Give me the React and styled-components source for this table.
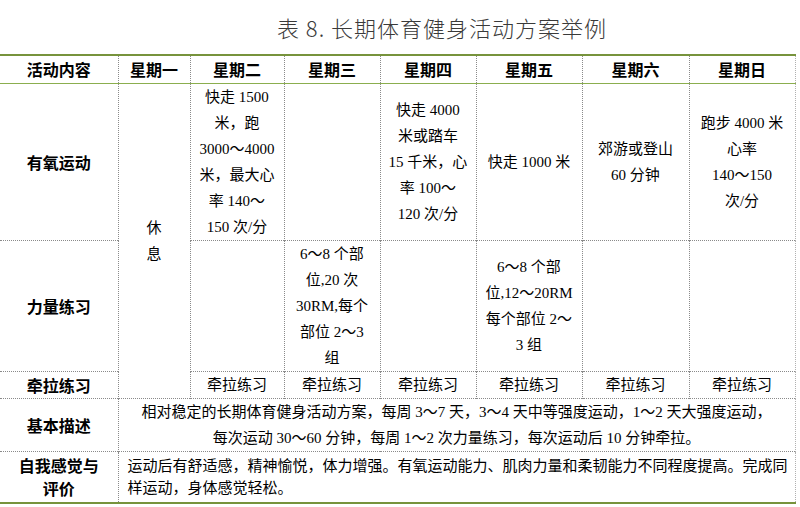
import React from "react"
import styled, { createGlobalStyle } from "styled-components";

const GlobalStyle = createGlobalStyle`
    html, body {
        margin: 0;
        padding: 0;
        background: #FFFFFF;
    }
`

const days = ["星期一", "星期二", "星期三", "星期四", "星期五", "星期六", "星期日"];
const colWidths = [118, 72, 94, 96, 96, 106, 107, 106];

const Lines = ({ lines }) => (
    <>
        {lines.map((line, i) => (
            <React.Fragment key={i}>
                {i > 0 && <br />}
                {line}
            </React.Fragment>
        ))}
    </>
);

const App = () => {
    return (
        <Page>
            <GlobalStyle />
            <Title>表 8. 长期体育健身活动方案举例</Title>
            <Table>
                <colgroup>
                    {colWidths.map((w, i) => <col key={i} style={{ width: w }} />)}
                </colgroup>
                <thead>
                    <HeadRow>
                        <HeadCell>活动内容</HeadCell>
                        {days.map(d => <HeadCell key={d}>{d}</HeadCell>)}
                    </HeadRow>
                </thead>
                <tbody>
                    <BodyRow $height={157}>
                        <LabelCell>有氧运动</LabelCell>
                        <Cell rowSpan={3}><Lines lines={["休", "息"]} /></Cell>
                        <Cell><Lines lines={["快走 1500", "米，跑", "3000～4000", "米，最大心", "率 140～", "150 次/分"]} /></Cell>
                        <Cell />
                        <Cell><Lines lines={["快走 4000", "米或踏车", "15 千米，心", "率 100～", "120 次/分"]} /></Cell>
                        <Cell>快走 1000 米</Cell>
                        <Cell><Lines lines={["郊游或登山", "60 分钟"]} /></Cell>
                        <Cell $last><Lines lines={["跑步 4000 米", "心率", "140～150", "次/分"]} /></Cell>
                    </BodyRow>
                    <BodyRow $height={130}>
                        <LabelCell>力量练习</LabelCell>
                        <Cell />
                        <Cell><Lines lines={["6～8 个部", "位,20 次", "30RM,每个", "部位 2～3", "组"]} /></Cell>
                        <Cell />
                        <Cell><Lines lines={["6～8 个部", "位,12～20RM", "每个部位 2～", "3 组"]} /></Cell>
                        <Cell />
                        <Cell $last />
                    </BodyRow>
                    <BodyRow $height={27}>
                        <LabelCell>牵拉练习</LabelCell>
                        <Cell>牵拉练习</Cell>
                        <Cell>牵拉练习</Cell>
                        <Cell>牵拉练习</Cell>
                        <Cell>牵拉练习</Cell>
                        <Cell>牵拉练习</Cell>
                        <Cell $last>牵拉练习</Cell>
                    </BodyRow>
                    <BodyRow $height={53}>
                        <LabelCell>基本描述</LabelCell>
                        <Cell colSpan={7} $last>
                            <Lines lines={[
                                "相对稳定的长期体育健身活动方案，每周 3～7 天，3～4 天中等强度运动，1～2 天大强度运动，",
                                "每次运动 30～60 分钟，每周 1～2 次力量练习，每次运动后 10 分钟牵拉。"
                            ]} />
                        </Cell>
                    </BodyRow>
                    <BodyRow $height={52} $end>
                        <LabelCell $lh={23}><Lines lines={["自我感觉与", "评价"]} /></LabelCell>
                        <Cell colSpan={7} $last $align="left" $lh={22}>
                            <Lines lines={[
                                "运动后有舒适感，精神愉悦，体力增强。有氧运动能力、肌肉力量和柔韧能力不同程度提高。完成同",
                                "样运动，身体感觉轻松。"
                            ]} />
                        </Cell>
                    </BodyRow>
                </tbody>
            </Table>
        </Page>
    );
}

const Page = styled.div`
    width: 800px;
    height: 507px;
    overflow: hidden;
    background: #FFFFFF;
`

const Title = styled.div`
    /* 表题 */
    height: 54px;
    padding-left: 84px;
    display: flex;
    justify-content: center;
    align-items: center;

    font-family: "Noto Sans CJK SC", sans-serif;
    font-weight: 300;
    font-size: 22px;
    letter-spacing: 1px;
    color: #3A3A3A;
`

const Table = styled.table`
    width: 795px;
    table-layout: fixed;
    border-collapse: collapse;
    border-top: 2px solid #77933C;

    font-family: "Liberation Serif", "Noto Sans CJK SC", serif;
    font-size: 15px;
    color: #000000;
`

const HeadRow = styled.tr`
    height: 28px;
    border-bottom: 1px solid #8BAE4E;
`

const BodyRow = styled.tr`
    height: ${p => p.$height}px;
    border-bottom: ${p => p.$end ? "2px solid #77933C" : "1px dotted #8A8A8A"};
`

const HeadCell = styled.th`
    padding: 0 4px;
    font-family: "Noto Sans CJK SC", sans-serif;
    font-weight: 700;
    font-size: 16px;
    line-height: 20px;
    text-align: center;
    border-left: 1px dotted #8A8A8A;

    &:first-child {
        border-left: none;
    }

    &:last-child {
        border-right: 1px dotted #B0B0B0;
    }
`

const LabelCell = styled.td`
    padding: 0 4px;
    font-family: "Noto Sans CJK SC", sans-serif;
    font-weight: 700;
    font-size: 16px;
    line-height: ${p => p.$lh || 20}px;
    text-align: center;
    vertical-align: middle;
`

const Cell = styled.td`
    padding: 0 ${p => p.$align === "left" ? "9px" : "3px"};
    line-height: ${p => p.$lh || 26}px;
    text-align: ${p => p.$align || "center"};
    vertical-align: middle;
    white-space: nowrap;
    border-left: 1px dotted #8A8A8A;
    border-right: ${p => p.$last ? "1px dotted #B0B0B0" : "none"};
`

export default App
